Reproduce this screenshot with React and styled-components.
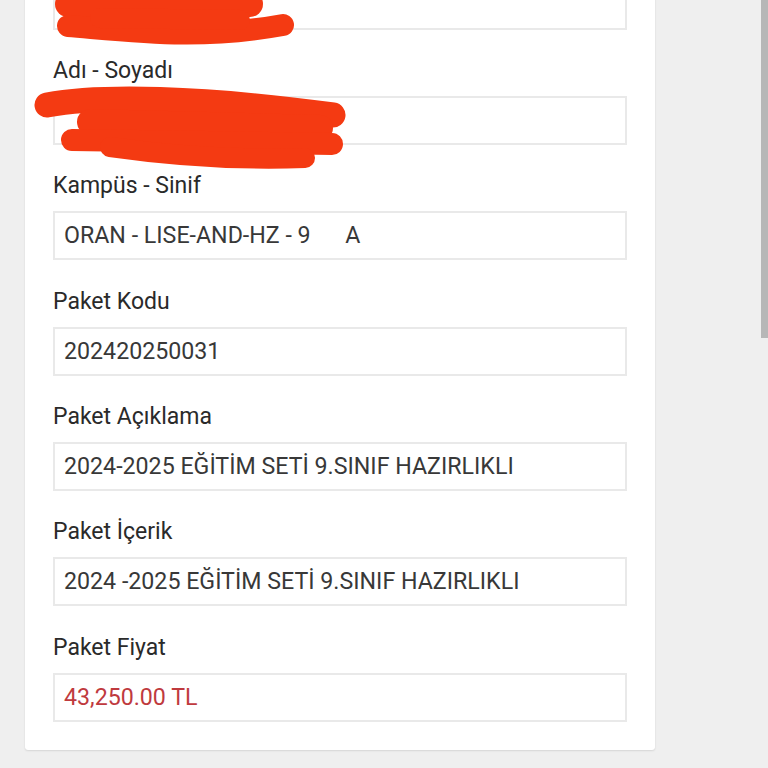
import React from "react";
import styled, { createGlobalStyle } from "styled-components";

const GlobalStyle = createGlobalStyle`
  html, body {
    margin: 0;
    padding: 0;
    background: #efefef;
    font-family: Roboto, "Liberation Sans", Arial, sans-serif;
    overflow: hidden;
  }
  body { position: relative; }
`;

const Page = styled.div`
  margin-top: -47.5px;
  padding: 0 0 19px 25px;
`;

const Card = styled.div`
  width: 630px;
  box-sizing: border-box;
  background: #ffffff;
  border-radius: 3px;
  box-shadow: 0 1px 2px rgba(0, 0, 0, 0.1), 0 0 1px rgba(0, 0, 0, 0.08);
  padding: 28px;
  display: flex;
  flex-direction: column;
  gap: 27.4px;
`;

const Field = styled.div`
  display: flex;
  flex-direction: column;
`;

const Label = styled.div`
  font-size: 23px;
  line-height: 27px;
  color: #2a2a2a;
  margin-bottom: 12px;
`;

const ValueBox = styled.div`
  height: 49px;
  box-sizing: border-box;
  border: 2px solid #e9e9e9;
  padding: 0 9px;
  display: flex;
  align-items: center;
  font-size: 23.2px;
  line-height: 27px;
  color: ${(p) => (p.$accent ? "#bf3a3e" : "#383838")};
  white-space: pre;
`;

const ScrollThumb = styled.div`
  position: fixed;
  top: 0;
  right: 0;
  width: 7px;
  height: 338px;
  background: #b7b7b7;
`;

const Redactions = styled.svg`
  position: absolute;
  top: 0;
  left: 0;
  pointer-events: none;
`;

const fields = [
  { label: null, value: "" },
  { label: "Adı - Soyadı", value: "" },
  { label: "Kampüs - Sinif", value: "ORAN - LISE-AND-HZ - 9      A" },
  { label: "Paket Kodu", value: "202420250031" },
  { label: "Paket Açıklama", value: "2024-2025 EĞİTİM SETİ 9.SINIF HAZIRLIKLI" },
  { label: "Paket İçerik", value: "2024 -2025 EĞİTİM SETİ 9.SINIF HAZIRLIKLI" },
  { label: "Paket Fiyat", value: "43,250.00 TL", accent: true },
];

export default function App() {
  return (
    <>
      <GlobalStyle />
      <Page>
        <Card>
          {fields.map((f, i) => (
            <Field key={i}>
              {f.label && <Label>{f.label}</Label>}
              <ValueBox $accent={f.accent}>{f.value}</ValueBox>
            </Field>
          ))}
        </Card>
      </Page>
      <Redactions width="768" height="200" viewBox="0 0 768 200">
        <g fill="none" stroke="#f43a12" strokeLinecap="round" strokeLinejoin="round">
          <path d="M 68 4 L 250 4" strokeWidth="26" />
          <path d="M 68 26 C 140 32, 200 40, 283 25" strokeWidth="22" />
          <path d="M 100 18 L 240 20" strokeWidth="20" />
          <path d="M 47 105 C 100 95, 200 97, 333 115" strokeWidth="25" />
          <path d="M 90 122 L 320 128" strokeWidth="26" />
          <path d="M 72 140 L 332 144" strokeWidth="22" />
          <path d="M 110 147 C 180 157, 250 160, 305 158" strokeWidth="20" />
        </g>
      </Redactions>
      <ScrollThumb />
    </>
  );
}
